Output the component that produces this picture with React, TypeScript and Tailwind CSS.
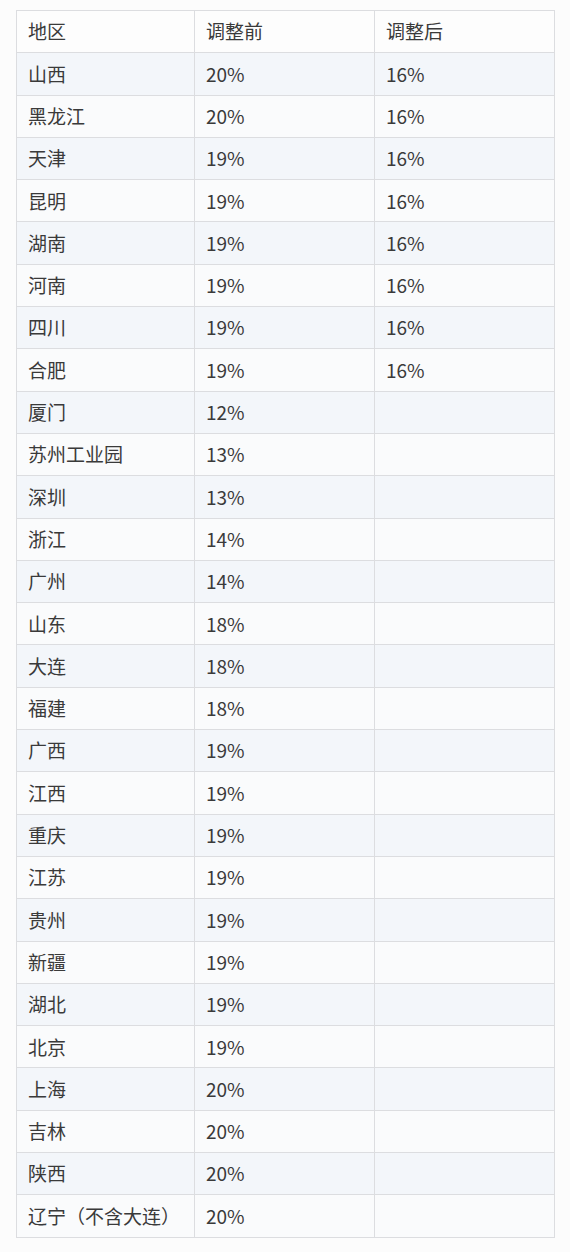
import React from 'react';

const rows: [string, string, string][] = [
  ['山西', '20%', '16%'],
  ['黑龙江', '20%', '16%'],
  ['天津', '19%', '16%'],
  ['昆明', '19%', '16%'],
  ['湖南', '19%', '16%'],
  ['河南', '19%', '16%'],
  ['四川', '19%', '16%'],
  ['合肥', '19%', '16%'],
  ['厦门', '12%', ''],
  ['苏州工业园', '13%', ''],
  ['深圳', '13%', ''],
  ['浙江', '14%', ''],
  ['广州', '14%', ''],
  ['山东', '18%', ''],
  ['大连', '18%', ''],
  ['福建', '18%', ''],
  ['广西', '19%', ''],
  ['江西', '19%', ''],
  ['重庆', '19%', ''],
  ['江苏', '19%', ''],
  ['贵州', '19%', ''],
  ['新疆', '19%', ''],
  ['湖北', '19%', ''],
  ['北京', '19%', ''],
  ['上海', '20%', ''],
  ['吉林', '20%', ''],
  ['陕西', '20%', ''],
  ['辽宁（不含大连）', '20%', ''],
];

const font = '"Noto Sans CJK SC", "Noto Sans", sans-serif';

export default function App() {
  return (
    <div className="min-h-[1252px] bg-[#fcfcfc] pl-4 pr-4 pt-[10px]" style={{ fontFamily: font }}>
      <table className="w-[538px] table-fixed border-collapse text-[19px] font-normal text-[#3a3a3a]">
        <colgroup>
          <col className="w-[178px]" />
          <col className="w-[180px]" />
          <col className="w-[180px]" />
        </colgroup>
        <thead>
          <tr className="h-[42.3px] bg-[#fdfdfd]">
            <th className="border border-[#dcdde0] px-[11px] text-left font-normal">地区</th>
            <th className="border border-[#dcdde0] px-[11px] text-left font-normal">调整前</th>
            <th className="border border-[#dcdde0] px-[11px] text-left font-normal">调整后</th>
          </tr>
        </thead>
        <tbody>
          {rows.map((r, i) => (
            <tr key={i} className={i % 2 === 0 ? 'h-[42.3px] bg-[#f3f6fa]' : 'h-[42.3px] bg-[#fafbfc]'}>
              <td className="whitespace-nowrap border border-[#dcdde0] px-[11px]">{r[0]}</td>
              <td className="border border-[#dcdde0] px-[11px]">{r[1]}</td>
              <td className="border border-[#dcdde0] px-[11px]">{r[2]}</td>
            </tr>
          ))}
        </tbody>
      </table>
    </div>
  );
}
